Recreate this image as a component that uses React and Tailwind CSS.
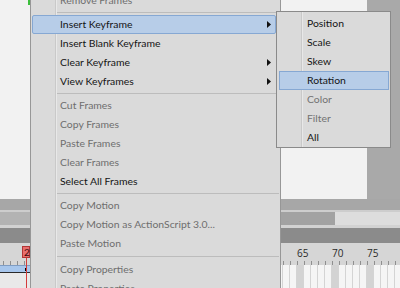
import React from "react";

const FONT = { fontFamily: 'Lato, "Open Sans", sans-serif' };

function Arrow({ mr }) {
  return (
    <svg width="4" height="7" viewBox="0 0 4 7" className={`ml-auto ${mr}`}>
      <path d="M0 0 L4 3.5 L0 7 Z" fill="#111" />
    </svg>
  );
}

function Item({ label, disabled, sub, active }) {
  const color = disabled ? "text-[#6e6e6e]" : "text-[#141414]";
  if (active) {
    return (
      <div className={`h-[19px] ml-[1px] mr-[4px] flex items-center pl-[27px] border border-[#86a8d3] rounded-[2px] bg-[#b7cde8] ${color}`}>
        <span>{label}</span>
        {sub && <Arrow mr="mr-[4px]" />}
      </div>
    );
  }
  return (
    <div className={`h-[19px] flex items-center pl-[29px] ${color}`}>
      <span>{label}</span>
      {sub && <Arrow mr="mr-[9px]" />}
    </div>
  );
}

function Sep({ h = "h-[5px]" }) {
  return (
    <div className={`${h} flex items-center ml-[26px] mr-[1px]`}>
      <div className="h-[1px] w-full bg-[#bcbcbc]" />
    </div>
  );
}

function SubItem({ label, disabled, active }) {
  const color = disabled ? "text-[#727272]" : "text-[#141414]";
  if (active) {
    return (
      <div className={`h-[19px] ml-[2px] mr-[1px] flex items-center pl-[27px] border border-[#86a8d3] bg-[#b7cde8] ${color}`}>
        {label}
      </div>
    );
  }
  return <div className={`h-[19px] flex items-center pl-[30px] ${color}`}>{label}</div>;
}

export default function App() {
  const cells = Array.from({ length: 57 }, (_, i) => i);
  return (
    <div className="relative w-[400px] h-[288px] overflow-hidden bg-[#a8a8a8] text-[10px]" style={FONT}>
      {/* stage + pasteboard */}
      <div className="flex h-[199px]">
        <div className="w-[367px] bg-[#f2f2f2]">
          <div className="ml-[28px] w-[2px] h-[5px] bg-[#3cbf3c]" />
        </div>
        <div className="flex-1 bg-[#a9a9a9]" />
      </div>
      <div className="h-[11px] bg-[#a7a7a7]" />
      <div className="h-[2px] bg-[#cdcdcd]" />
      <div className="flex h-[13px]">
        <div className="w-[30px] bg-[#b3b3b3]" />
        <div className="w-[305px] bg-[#a2a2a2]" />
        <div className="flex-1 bg-[#dddddd]" />
      </div>
      <div className="h-[3px] bg-[#d2d2d2]" />
      <div className="h-[15px] bg-[#8b8b8b]" />
      {/* ruler */}
      <div className="h-[22px] bg-[#d6d6d6] flex flex-col pl-[3px]">
        <div className="h-[17px] flex items-end pb-[2px]">
          {cells.map((i) => {
            const f = 23 + i;
            return (
              <div key={i} className="w-[7px] shrink-0 whitespace-nowrap text-[10px] leading-[10px] text-[#2a2a2a] overflow-visible" style={{ fontFamily: '"Open Sans", sans-serif' }}>
                {f % 5 === 0 && f >= 65 && f <= 75 ? f : ""}
              </div>
            );
          })}
        </div>
        <div className="h-[5px] flex">
          {cells.map((i) => (
            <div key={i} className="w-[7px] shrink-0 border-l border-[#8f8f8f] h-[4px] mt-[1px]" />
          ))}
        </div>
      </div>
      {/* frames row */}
      <div className="h-[23px] flex">
        <div className="w-[31px] shrink-0 flex flex-col">
          <div className="h-[8px] bg-[#a7c6ec] border-t border-[#7f9cc2] border-b border-b-[#2a2a2a] border-r border-r-[#2a2a2a] flex items-center">
            <div className="ml-[25px] w-[2px] h-[3px] bg-black" />
          </div>
          <div className="flex-1 bg-[#e9e9e9]" />
        </div>
        {cells.slice(4).map((i) => (
          <div
            key={i}
            className={`w-[7px] shrink-0 border-r border-[#d4d4d4] ${i % 5 === 2 ? "bg-[#d3d3d3]" : "bg-[#f5f5f5]"}`}
          />
        ))}
      </div>

      {/* playhead */}
      <div className="absolute left-[22px] top-[246px] w-[8px] h-[12px] bg-[#e86e6e] border border-[#b23636] text-[10px] leading-[10px] text-[#3a0a0a] pl-[1px]">
        2
      </div>
      <div className="absolute left-[26px] top-[258px] w-[1px] h-[30px] bg-[#d43c3c]" />

      {/* context menu */}
      <div
        className="absolute left-[30px] top-[-11px] w-[251px] border border-[#979797] text-[10.4px] leading-[11px] bg-[linear-gradient(to_right,#dadada_24px,#c9c9c9_24px,#c9c9c9_25px,#e8e8e8_25px,#e8e8e8_26px,#dadada_26px)] py-[1px]"
      >
        <Item label="Remove Frames" disabled />
        <Sep />
        <Item label="Insert Keyframe" sub active />
        <Item label="Insert Blank Keyframe" />
        <Item label="Clear Keyframe" sub />
        <Item label="View Keyframes" sub />
        <Sep />
        <Item label="Cut Frames" disabled />
        <Item label="Copy Frames" disabled />
        <Item label="Paste Frames" disabled />
        <Item label="Clear Frames" disabled />
        <Item label="Select All Frames" />
        <Sep />
        <Item label="Copy Motion" disabled />
        <Item label="Copy Motion as ActionScript 3.0..." disabled />
        <Item label="Paste Motion" disabled />
        <Sep h="h-[7px]" />
        <Item label="Copy Properties" disabled />
        <Item label="Paste Properties" disabled />
      </div>

      {/* submenu */}
      <div className="absolute left-[276px] top-[11px] w-[115px] h-[137px] border border-[#8a8a8a] text-[10.4px] leading-[11px] pt-[2px] bg-[linear-gradient(to_right,#dadada_24px,#c9c9c9_24px,#c9c9c9_25px,#e8e8e8_25px,#e8e8e8_26px,#dadada_26px)]">
        <SubItem label="Position" />
        <SubItem label="Scale" />
        <SubItem label="Skew" />
        <SubItem label="Rotation" active />
        <SubItem label="Color" disabled />
        <SubItem label="Filter" disabled />
        <SubItem label="All" />
      </div>
    </div>
  );
}
